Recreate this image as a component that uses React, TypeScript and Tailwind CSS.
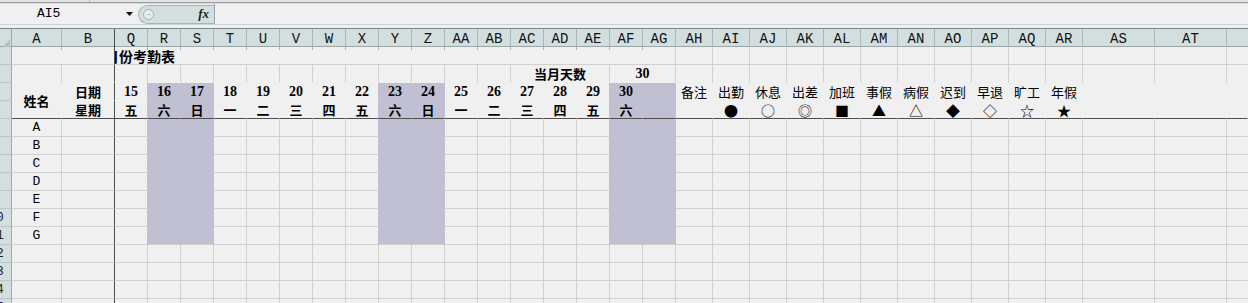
import React from 'react';

const scrollCols = ['Q', 'R', 'S', 'T', 'U', 'V', 'W', 'X', 'Y', 'Z', 'AA', 'AB', 'AC', 'AD', 'AE', 'AF', 'AG'];
const rightCols = ['AH', 'AI', 'AJ', 'AK', 'AL', 'AM', 'AN', 'AO', 'AP', 'AQ', 'AR'];
const shadedCols = new Set(['R', 'S', 'Y', 'Z', 'AF', 'AG']);
const beforeShaded = new Set(['Q', 'X', 'AE']);
const dates = ['15', '16', '17', '18', '19', '20', '21', '22', '23', '24', '25', '26', '27', '28', '29', '30', ''];
const weekdays = ['五', '六', '日', '一', '二', '三', '四', '五', '六', '日', '一', '二', '三', '四', '五', '六', ''];
const legend = ['备注', '出勤', '休息', '出差', '加班', '事假', '病假', '迟到', '早退', '旷工', '年假'];
const symbols = ['', '●', '○', '◎', '■', '▲', '△', '◆', '◇', '☆', '★'];
const names = ['A', 'B', 'C', 'D', 'E', 'F', 'G'];

const GRID = 'grid grid-cols-[12px_50px_53px_repeat(17,33px)_repeat(11,37px)_72px_72px_1fr]';
const CELL = 'flex items-center justify-center overflow-hidden border-r border-b leading-none';

// border colours, one side at a time
const R_GRID = 'border-r-[#d0d0d0]';
const R_DARK = 'border-r-[#4e4e4e]';
const R_NONE = 'border-r-transparent';
const R_SHADE = 'border-r-[#c1c0d3]';
const B_GRID = 'border-b-[#d0d0d0]';
const B_DARK = 'border-b-[#4e4e4e]';
const B_NONE = 'border-b-transparent';
const SHADE = 'bg-[#c1c0d3]';

const MONO = "font-['Liberation_Mono',monospace]";
const NUM = "font-['Liberation_Serif',serif] font-bold text-[14px]";

function RowHead({ n }: { n: number }) {
    return (
        <div className="overflow-hidden border-r border-b border-r-[#9ba9a9] border-b-[#b9c6c6] bg-[#d3dfdf]">
            <div className={`-ml-[20px] flex h-full w-[32px] items-center justify-center ${MONO} text-[13px] text-[#222]`}>
                {n}
            </div>
        </div>
    );
}

function FormulaBar() {
    return (
        <div className="flex h-[28px] flex-col bg-[#f0f0f0]">
            {/* ribbon edge */}
            <div className="flex h-[2px] bg-[#e3e3e3]">
                <div className="w-[90px] border-r border-[#b4b4b4]" />
            </div>
            <div className="h-px bg-[#9d9d9d]" />
            <div className="h-px bg-[#dadada]" />
            <div className="flex h-[20px] items-center">
                {/* name box */}
                <div className={`w-[122px] pl-[37px] ${MONO} text-[13px] text-black`}>AI5</div>
                <div className="flex w-[16px] items-center">
                    <svg width="7" height="4" viewBox="0 0 7 4" className="ml-[4px]">
                        <polygon points="0,0 7,0 3.5,4" fill="#111" />
                    </svg>
                </div>
                {/* buttons pill */}
                <div className="flex h-[19px] w-[76px] items-center rounded-l-full border border-r-0 border-[#a6b4b4] bg-[#d3dfdf] pl-[4px]">
                    <div className="flex h-[11px] w-[11px] items-center justify-center rounded-full border border-[#9fb0b0] bg-[#e6eded]">
                        <div className="h-px w-[4px] bg-[#b5c2c2]" />
                    </div>
                    <div className="ml-auto mr-[5px] font-['Liberation_Serif',serif] text-[13px] font-bold italic text-[#222]">
                        fx
                    </div>
                </div>
                <div className="h-full w-px bg-[#a3a3a3]" />
                <div className="flex-1" />
            </div>
            <div className="h-px bg-[#c6d5e4]" />
            <div className="flex-1" />
        </div>
    );
}

function ColumnHeader() {
    const hc = `flex items-center justify-center border-r border-r-[#a9b6b6] ${MONO} text-[14px] text-[#111]`;
    return (
        <div className={`${GRID} h-[19px] border-t border-b border-t-[#7f8686] border-b-[#9ca6a6] bg-[#d3dfdf]`}>
            {/* corner */}
            <div className="flex items-end justify-end border-r border-r-[#9ba9a9] pb-[2px] pr-[1px]">
                <svg width="8" height="9" viewBox="0 0 8 9">
                    <polygon points="8,0 8,9 0,9" fill="#b3c1c1" />
                </svg>
            </div>
            <div className={hc}>A</div>
            <div className={`flex items-center justify-center border-r border-r-[#4e4e4e] ${MONO} text-[14px] text-[#111]`}>B</div>
            {scrollCols.map((c) => (
                <div key={c} className={hc}>{c}</div>
            ))}
            {rightCols.map((c) => (
                <div key={c} className={hc}>{c}</div>
            ))}
            <div className={hc}>AS</div>
            <div className={hc}>AT</div>
            <div />
        </div>
    );
}

function Sheet() {
    const cells: React.ReactNode[] = [];

    // row 1 : title, clipped by the frozen pane
    cells.push(<RowHead key="h1" n={1} />);
    cells.push(<div key="a1" className={`col-span-2 ${CELL} ${R_DARK} ${B_GRID}`} />);
    cells.push(
        <div key="q1" className={`col-span-17 flex items-center overflow-hidden border-r border-b ${R_GRID} ${B_GRID}`}>
            <span className="-ml-[10px] whitespace-nowrap text-[14px] font-bold leading-none text-black">月份考勤表</span>
        </div>
    );
    [...rightCols, 'AS', 'AT'].forEach((c) => cells.push(<div key={'r1' + c} className={`${CELL} ${R_GRID} ${B_GRID}`} />));
    cells.push(<div key="z1" className={`${CELL} ${R_NONE} ${B_GRID}`} />);

    // row 2 : days in month
    cells.push(<RowHead key="h2" n={2} />);
    cells.push(<div key="a2" className={`${CELL} ${R_GRID} ${B_NONE}`} />);
    cells.push(<div key="b2" className={`${CELL} ${R_DARK} ${B_NONE}`} />);
    scrollCols.slice(0, 12).forEach((c) => cells.push(<div key={'r2' + c} className={`${CELL} ${R_GRID} ${B_NONE}`} />));
    cells.push(
        <div key="ac2" className={`col-span-3 ${CELL} ${R_GRID} ${B_NONE} text-[13px] font-bold`}>当月天数</div>
    );
    cells.push(<div key="af2" className={`col-span-2 ${CELL} ${R_GRID} ${B_NONE} ${NUM}`}>30</div>);
    [...rightCols, 'AS', 'AT'].forEach((c) => cells.push(<div key={'r2' + c} className={`${CELL} ${R_GRID} ${B_NONE}`} />));
    cells.push(<div key="z2" className={`${CELL} ${R_NONE} ${B_NONE}`} />);

    // row 3 : dates + legend
    cells.push(<RowHead key="h3" n={3} />);
    cells.push(
        <div key="a3" className={`row-span-2 ${CELL} ${R_NONE} ${B_DARK} text-[13px] font-bold`}>姓名</div>
    );
    cells.push(<div key="b3" className={`${CELL} ${R_DARK} ${B_NONE} text-[13px] font-bold`}>日期</div>);
    scrollCols.forEach((c, i) => {
        const sh = shadedCols.has(c);
        const cls = sh ? `${SHADE} ${R_NONE} ${B_NONE}` : `${beforeShaded.has(c) ? R_SHADE : R_NONE} ${B_NONE}`;
        cells.push(<div key={'r3' + c} className={`${CELL} ${cls} ${NUM}`}>{dates[i]}</div>);
    });
    rightCols.forEach((c, i) =>
        cells.push(<div key={'r3' + c} className={`${CELL} ${R_NONE} ${B_NONE} text-[13px]`}>{legend[i]}</div>)
    );
    ['AS', 'AT', 'z'].forEach((c) => cells.push(<div key={'r3' + c} className={`${CELL} ${R_NONE} ${B_NONE}`} />));

    // row 4 : weekdays + symbols, frozen line below
    cells.push(<RowHead key="h4" n={4} />);
    cells.push(<div key="b4" className={`${CELL} ${R_DARK} ${B_DARK} text-[13px] font-bold`}>星期</div>);
    scrollCols.forEach((c, i) => {
        const sh = shadedCols.has(c);
        const cls = sh ? `${SHADE} ${R_NONE}` : beforeShaded.has(c) ? R_SHADE : R_NONE;
        cells.push(
            <div key={'r4' + c} className={`${CELL} ${cls} ${B_DARK} text-[13px] font-bold`}>{weekdays[i]}</div>
        );
    });
    rightCols.forEach((c, i) =>
        cells.push(<div key={'r4' + c} className={`${CELL} ${R_NONE} ${B_DARK} text-[14px]`}>{symbols[i]}</div>)
    );
    ['AS', 'AT', 'z'].forEach((c) => cells.push(<div key={'r4' + c} className={`${CELL} ${R_NONE} ${B_DARK}`} />));

    // rows 5..15 : employees
    for (let r = 5; r <= 15; r++) {
        const inData = r <= 11;
        cells.push(<RowHead key={'h' + r} n={r} />);
        cells.push(
            <div key={'a' + r} className={`${CELL} ${R_GRID} ${B_GRID} ${MONO} text-[13px]`}>
                {inData ? names[r - 5] : ''}
            </div>
        );
        cells.push(<div key={'b' + r} className={`${CELL} ${R_DARK} ${B_GRID}`} />);
        scrollCols.forEach((c) => {
            let cls = `${R_GRID} ${B_GRID}`;
            if (inData && shadedCols.has(c)) cls = `${SHADE} ${R_SHADE} ${r === 11 ? B_GRID : 'border-b-[#c1c0d3]'}`;
            else if (inData && beforeShaded.has(c)) cls = `${R_SHADE} ${B_GRID}`;
            cells.push(<div key={r + c} className={`${CELL} ${cls}`} />);
        });
        [...rightCols, 'AS', 'AT'].forEach((c) => cells.push(<div key={r + c} className={`${CELL} ${R_GRID} ${B_GRID}`} />));
        cells.push(<div key={r + 'z'} className={`${CELL} ${R_NONE} ${B_GRID}`} />);
    }

    return <div className={`${GRID} auto-rows-[18px] text-black`}>{cells}</div>;
}

export default function App() {
    return (
        <div className="h-[303px] w-[1248px] overflow-hidden bg-[#f0f0f0] font-['Noto_Sans_CJK_SC',sans-serif] text-black">
            <FormulaBar />
            <ColumnHeader />
            <Sheet />
        </div>
    );
}
